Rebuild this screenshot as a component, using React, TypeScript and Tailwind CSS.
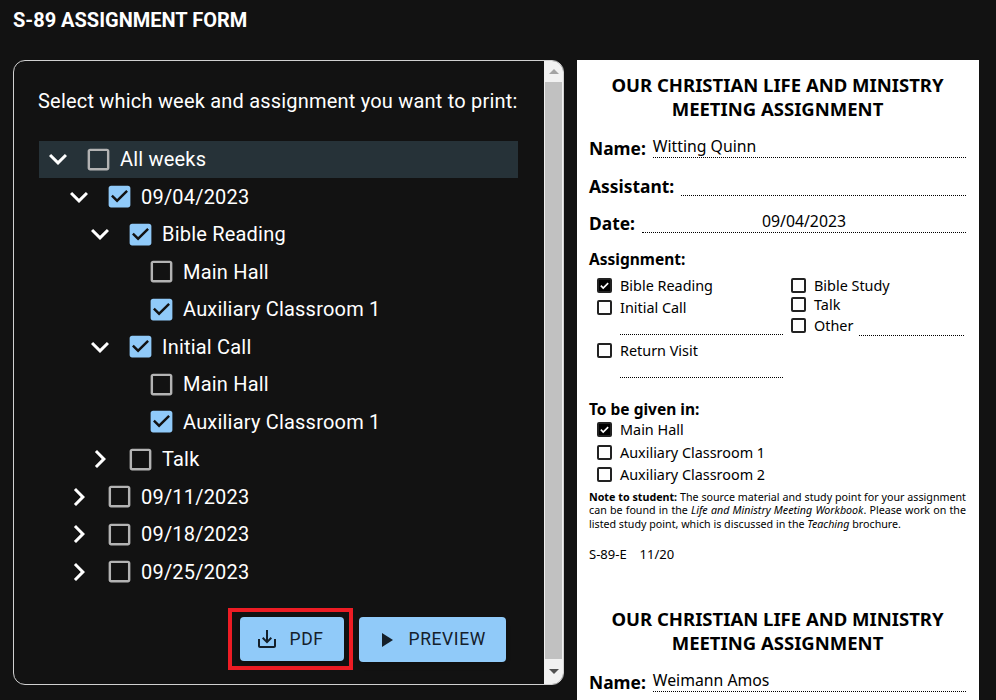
const chevronDown = 'M16.59 8.59L12 13.17 7.41 8.59 6 10l6 6 6-6z'
const chevronRight = 'M10 6L8.59 7.41 13.17 12l-4.58 4.59L10 18l6-6z'

interface TreeRow {
    label: string
    level: number
    open?: boolean
    checked?: boolean
}

const rows: TreeRow[] = [
    { label: 'All weeks', level: 0, open: true },
    { label: '09/04/2023', level: 1, open: true, checked: true },
    { label: 'Bible Reading', level: 2, open: true, checked: true },
    { label: 'Main Hall', level: 3 },
    { label: 'Auxiliary Classroom 1', level: 3, checked: true },
    { label: 'Initial Call', level: 2, open: true, checked: true },
    { label: 'Main Hall', level: 3 },
    { label: 'Auxiliary Classroom 1', level: 3, checked: true },
    { label: 'Talk', level: 2, open: false },
    { label: '09/11/2023', level: 1, open: false },
    { label: '09/18/2023', level: 1, open: false },
    { label: '09/25/2023', level: 1, open: false },
]

const indents = ['pl-0', 'pl-[21px]', 'pl-[42px]', 'pl-[63px]']

function Icon({ d, className }: { d: string; className: string }) {
    return (
        <svg viewBox="0 0 24 24" className={className} fill="currentColor">
            <path d={d} />
        </svg>
    )
}

function TreeCheckbox({ checked }: { checked?: boolean }) {
    if (checked) {
        return (
            <span className="relative block w-[29px] h-[29px] shrink-0 ml-[7px] text-[#90caf9]">
                <span className="absolute left-[6px] top-[6px] w-[17px] h-[17px] bg-[#121212]" />
                <Icon
                    className="absolute inset-0 w-[29px] h-[29px]"
                    d="M19 3H5c-1.11 0-2 .9-2 2v14c0 1.1.89 2 2 2h14c1.11 0 2-.9 2-2V5c0-1.1-.89-2-2-2zm-9 14l-5-5 1.41-1.41L10 14.17l7.59-7.59L19 8l-9 9z"
                />
            </span>
        )
    }
    return (
        <Icon
            className="w-[29px] h-[29px] shrink-0 ml-[7px] text-[#b3b3b3]"
            d="M19 5v14H5V5h14m0-2H5c-1.1 0-2 .9-2 2v14c0 1.1.9 2 2 2h14c1.1 0 2-.9 2-2V5c0-1.1-.9-2-2-2z"
        />
    )
}

function Tree() {
    return (
        <div className="flex flex-col">
            {rows.map((row, index) => (
                <div
                    key={index}
                    className={`flex items-center h-[37.5px] ${indents[row.level]} ${index === 0 ? 'bg-[#263238]' : ''}`}
                >
                    <span className="w-[38px] flex justify-center shrink-0">
                        {row.open !== undefined && (
                            <Icon className="w-[36px] h-[36px] text-white" d={row.open ? chevronDown : chevronRight} />
                        )}
                    </span>
                    <TreeCheckbox checked={row.checked} />
                    <span className="ml-[7px] text-[20px] tracking-[0.2px] text-white">{row.label}</span>
                </div>
            ))}
        </div>
    )
}

function PaperCheck({ checked }: { checked?: boolean }) {
    return (
        <span className={`flex items-center justify-center w-[15px] h-[15px] shrink-0 rounded-[2px] border-2 border-[#222] ${checked ? 'bg-black' : 'bg-white'}`}>
            {checked && (
                <svg viewBox="0 0 12 12" className="w-[11px] h-[11px] text-white" fill="none" stroke="currentColor" strokeWidth="1.8">
                    <path d="M2 6.2l2.6 2.6L10 3.4" />
                </svg>
            )}
        </span>
    )
}

function PaperOption({ label, checked, className }: { label: string; checked?: boolean; className?: string }) {
    return (
        <div className={`flex items-center ${className ?? ''}`}>
            <PaperCheck checked={checked} />
            <span className="ml-[8px] text-[14.4px] leading-[19px]">{label}</span>
        </div>
    )
}

function Field({ label, value, center, className }: { label: string; value?: string; center?: boolean; className?: string }) {
    return (
        <div className={`flex items-end h-[24px] ${className ?? ''}`}>
            <span className="text-[17.4px] leading-[20px] font-bold">{label}</span>
            <span className={`ml-[7px] flex-1 h-[24px] border-b border-dotted border-black text-[15.8px] leading-[24px] ${center ? 'text-center' : ''}`}>
                {value}
            </span>
        </div>
    )
}

function AssignmentForm({ name, date }: { name: string; date: string }) {
    return (
        <div className="h-[534px] shrink-0 pl-[12px] pr-[13px] pt-[13px] text-black font-['Noto_Sans',sans-serif]">
            <div className="text-center text-[18.5px] leading-[23.5px] font-bold">
                <div>OUR CHRISTIAN LIFE AND MINISTRY</div>
                <div>MEETING ASSIGNMENT</div>
            </div>
            <Field label="Name:" value={name} className="mt-[14px]" />
            <Field label="Assistant:" className="mt-[14px]" />
            <Field label="Date:" value={date} center className="mt-[13px]" />

            <div className="mt-[16px] text-[15.5px] leading-[20px] font-bold">Assignment:</div>
            <div className="flex mt-[7px] pl-[8px]">
                <div className="w-[194px] shrink-0">
                    <PaperOption label="Bible Reading" checked />
                    <PaperOption label="Initial Call" className="mt-[3px]" />
                    <div className="ml-[23px] w-[163px] h-[18px] border-b border-dotted border-black" />
                    <PaperOption label="Return Visit" className="mt-[6px]" />
                    <div className="ml-[23px] w-[163px] h-[18px] border-b border-dotted border-black" />
                </div>
                <div className="flex-1">
                    <PaperOption label="Bible Study" />
                    <PaperOption label="Talk" />
                    <div className="flex items-end mt-[2px]">
                        <PaperOption label="Other" />
                        <span className="ml-[6px] flex-1 mr-[2px] -mb-[1px] border-b border-dotted border-black" />
                    </div>
                </div>
            </div>

            <div className="mt-[21px] text-[15.5px] leading-[20px] font-bold">To be given in:</div>
            <div className="pl-[8px] mt-[1px] flex flex-col gap-[3.5px]">
                <PaperOption label="Main Hall" checked />
                <PaperOption label="Auxiliary Classroom 1" />
                <PaperOption label="Auxiliary Classroom 2" />
            </div>
            <p className="mt-[7px] text-[10.7px] leading-[13.4px] text-justify">
                <b>Note to student:</b> The source material and study point for your assignment can be found in the{' '}
                <i>Life and Ministry Meeting Workbook</i>. Please work on the listed study point, which is discussed in the{' '}
                <i>Teaching</i> brochure.
            </p>
            <div className="mt-[15px] text-[13px] leading-[16px] flex gap-[13px]">
                <span>S-89-E</span>
                <span>11/20</span>
            </div>
        </div>
    )
}

export default function App() {
    return (
        <div className="h-[700px] overflow-hidden bg-[#121212] font-['Roboto',sans-serif]">
            <h1 className="h-[60px] pl-[13px] pt-[8px] text-[20px] leading-[24px] font-bold text-white">S-89 ASSIGNMENT FORM</h1>
            <div className="flex items-start">
                <div className="ml-[13px] w-[551px] h-[625px] flex rounded-[12px] border border-[#d0d0d0] overflow-hidden">
                    <div className="flex-1 pl-[25px] pr-[26px] pt-[26px]">
                        <p className="-ml-[1px] text-[20px] leading-[28px] tracking-[0.2px] text-white whitespace-nowrap">
                            Select which week and assignment you want to print:
                        </p>
                        <div className="mt-[25.5px]">
                            <Tree />
                        </div>
                        <div className="flex items-start justify-end mt-[17.5px]">
                            <div className="border-4 border-[#ed1c24] pl-[8px] pr-[5px] py-[5px]">
                                <button className="flex items-center pl-[15px] gap-[11px] w-[104px] h-[44px] rounded-[4px] bg-[#90caf9] text-[#14202b] text-[17.5px] tracking-[0.6px] shadow-md">
                                    <Icon className="w-[24px] h-[24px]" d="M19 12v7H5v-7H3v7c0 1.1.9 2 2 2h14c1.1 0 2-.9 2-2v-7h-2zm-6 .67l2.59-2.58L17 11.5l-5 5-5-5 1.41-1.41L11 12.67V3h2z" />
                                    PDF
                                </button>
                            </div>
                            <button className="ml-[6px] mt-[9px] mr-[12px] flex items-center pl-[15px] gap-[11px] w-[147px] h-[45px] rounded-[4px] bg-[#90caf9] text-[#14202b] text-[17.5px] tracking-[0.6px] shadow-md">
                                <Icon className="w-[24px] h-[24px]" d="M8 5v14l11-7z" />
                                PREVIEW
                            </button>
                        </div>
                    </div>
                    <div className="w-[20px] shrink-0 bg-[#f1f1f1] flex flex-col items-center">
                        <div className="h-[21px] flex items-center justify-center">
                            <span className="w-0 h-0 border-x-[5px] border-x-transparent border-b-[5px] border-b-[#a3a3a3]" />
                        </div>
                        <div className="w-[17px] flex-1 bg-[#c1c1c1]" />
                        <div className="h-[25px] flex items-center justify-center">
                            <span className="w-0 h-0 border-x-[5px] border-x-transparent border-t-[5px] border-t-[#505050]" />
                        </div>
                    </div>
                </div>
                <div className="ml-[13px] w-[402px] h-[640px] bg-white overflow-hidden flex flex-col">
                    <AssignmentForm name="Witting Quinn" date="09/04/2023" />
                    <AssignmentForm name="Weimann Amos" date="09/04/2023" />
                </div>
            </div>
        </div>
    )
}
